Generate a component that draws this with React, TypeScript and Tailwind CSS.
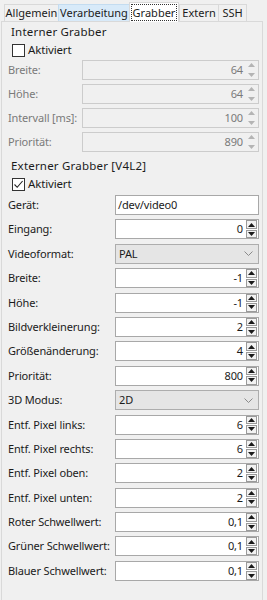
import React from 'react';

const INTERN = [
  { label: 'Breite:', value: '64' },
  { label: 'Höhe:', value: '64' },
  { label: 'Intervall [ms]:', value: '100' },
  { label: 'Priorität:', value: '890' },
];

type Row =
  | { kind: 'text'; label: string; value: string }
  | { kind: 'spin'; label: string; value: string }
  | { kind: 'combo'; label: string; value: string };

const EXTERN: Row[] = [
  { kind: 'text', label: 'Gerät:', value: '/dev/video0' },
  { kind: 'spin', label: 'Eingang:', value: '0' },
  { kind: 'combo', label: 'Videoformat:', value: 'PAL' },
  { kind: 'spin', label: 'Breite:', value: '-1' },
  { kind: 'spin', label: 'Höhe:', value: '-1' },
  { kind: 'spin', label: 'Bildverkleinerung:', value: '2' },
  { kind: 'spin', label: 'Größenänderung:', value: '4' },
  { kind: 'spin', label: 'Priorität:', value: '800' },
  { kind: 'combo', label: '3D Modus:', value: '2D' },
  { kind: 'spin', label: 'Entf. Pixel links:', value: '6' },
  { kind: 'spin', label: 'Entf. Pixel rechts:', value: '6' },
  { kind: 'spin', label: 'Entf. Pixel oben:', value: '2' },
  { kind: 'spin', label: 'Entf. Pixel unten:', value: '2' },
  { kind: 'spin', label: 'Roter Schwellwert:', value: '0,1' },
  { kind: 'spin', label: 'Grüner Schwellwert:', value: '0,1' },
  { kind: 'spin', label: 'Blauer Schwellwert:', value: '0,1' },
];

/* ── tiny up/down buttons of a spin box ── */
const SpinArrows: React.FC<{ disabled?: boolean }> = ({ disabled }) => {
  const fill = disabled ? '#b4b4b4' : '#1a1a1a';
  const box = disabled ? 'border border-transparent' : 'border border-[#9a9a9a] bg-[#f2f2f2]';
  return (
    <div className="flex flex-col w-[11px] h-[18px] mr-px gap-px">
      <div className={`flex-1 flex items-center justify-center ${box}`}>
        <svg width="7" height="4" viewBox="0 0 7 4">
          <path d="M0 4 L3.5 0 L7 4 Z" fill={fill} />
        </svg>
      </div>
      <div className={`flex-1 flex items-center justify-center ${box}`}>
        <svg width="7" height="4" viewBox="0 0 7 4">
          <path d="M0 0 L3.5 4 L7 0 Z" fill={fill} />
        </svg>
      </div>
    </div>
  );
};

const CheckBox: React.FC<{ checked?: boolean }> = ({ checked }) => (
  <div className="flex items-center h-[16px] ml-[4px] gap-[3px]">
    <div className="w-[13px] h-[13px] border border-[#333333] bg-white flex items-center justify-center">
      {checked && (
        <svg width="11" height="11" viewBox="0 0 11 11">
          <path d="M1.5 5.5 L4.2 8.3 L9.6 2" fill="none" stroke="#222" strokeWidth="1.1" />
        </svg>
      )}
    </div>
    <span className="text-[11.5px]">Aktiviert</span>
  </div>
);

const Tab: React.FC<{ label: string; w: string; state?: 'sel' | 'hover'; last?: boolean }> = ({
  label,
  w,
  state,
  last,
}) => {
  if (state === 'sel') {
    return (
      <div className={`${w} h-[20px] -mb-px bg-white border border-b-0 border-[#d9d9d9] flex items-center justify-center relative z-10`}>
        <span className="border border-dotted border-[#333] px-px leading-[15px]">{label}</span>
      </div>
    );
  }
  const bg = state === 'hover' ? 'bg-[#d8eaf9] border-[#c4dcf0]' : 'bg-[#f0f0f0] border-[#d9d9d9]';
  return (
    <div className={`${w} h-[17px] ${bg} border border-b-0 ${last ? '' : 'border-r-0'} flex items-center justify-center`}>
      {label}
    </div>
  );
};

export default function App() {
  return (
    <div className="w-[267px] h-[600px] overflow-hidden bg-[#f0f0f0] text-[11px] tracking-[-0.15px] text-[#1b1b1b] font-['Noto_Sans',sans-serif] leading-[16px] whitespace-nowrap">
      {/* ── Tabs ── */}
      <div className="h-[21px] flex items-end pl-[4px] text-[11px] tracking-[0px]">
        <Tab label="Allgemein" w="w-[54px]" />
        <Tab label="Verarbeitung" w="w-[71px]" state="hover" />
        <Tab label="Grabber" w="w-[50px]" state="sel" />
        <Tab label="Extern" w="w-[39px]" />
        <Tab label="SSH" w="w-[29px]" last />
      </div>

      {/* ── Panel ── */}
      <div className="ml-px w-[262px] h-[579px] border border-b-0 border-[#d9d9d9] bg-[#f0f0f0] pl-[6px] pr-[3px] pt-[2px]">
        {/* Interner Grabber */}
        <div className="ml-[3px] text-[11.5px] tracking-[0.2px]">Interner Grabber</div>
        <div className="mt-[2px]">
          <CheckBox />
        </div>
        <div className="mt-[2px] flex flex-col gap-[4px]">
          {INTERN.map((r) => (
            <div key={r.label} className="flex items-center h-[20px]">
              <span className="w-[74px] text-[#7a7a7a]">{r.label}</span>
              <div className="flex-1 h-[20px] border border-[#cccccc] bg-[#f0f0f0] flex items-center justify-end">
                <span className="text-[#7a7a7a] mr-[3px]">{r.value}</span>
                <SpinArrows disabled />
              </div>
            </div>
          ))}
        </div>

        {/* Externer Grabber */}
        <div className="ml-[3px] mt-[6px] text-[11.5px] tracking-[0.2px]">Externer Grabber [V4L2]</div>
        <div className="mt-[2px]">
          <CheckBox checked />
        </div>
        <div className="mt-[3px] flex flex-col gap-[4.4px]">
          {EXTERN.map((r) => (
            <div key={r.label} className="flex items-center h-[20px]">
              <span className="w-[107px]">{r.label}</span>
              {r.kind === 'text' && (
                <div className="flex-1 h-[20px] border border-[#a8a8a8] bg-white flex items-center pl-[2px]">
                  {r.value}
                </div>
              )}
              {r.kind === 'spin' && (
                <div className="flex-1 h-[20px] border border-[#a8a8a8] bg-white flex items-center justify-end">
                  <span className="mr-[3px]">{r.value}</span>
                  <SpinArrows />
                </div>
              )}
              {r.kind === 'combo' && (
                <div className="flex-1 h-[20px] border border-[#adadad] bg-[#e5e5e5] flex items-center justify-between pl-[3px] pr-[5px]">
                  <span>{r.value}</span>
                  <svg width="9" height="5" viewBox="0 0 9 5">
                    <path d="M0.5 0.5 L4.5 4.5 L8.5 0.5" fill="none" stroke="#8a8a8a" strokeWidth="1" />
                  </svg>
                </div>
              )}
            </div>
          ))}
        </div>
      </div>
    </div>
  );
}
